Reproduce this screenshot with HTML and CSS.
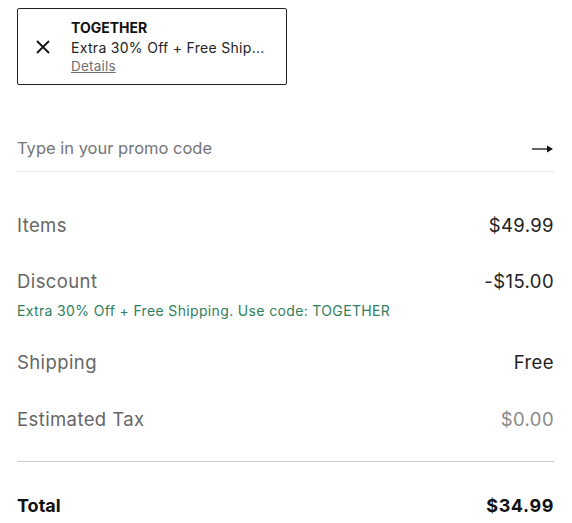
FILE: index.html
```html
<!DOCTYPE html>
<html>
<head>
<meta charset="utf-8">
<link rel="stylesheet" href="styles.css">
</head>
<body>
<div class="page">
  <div class="promo-card">
    <button class="remove" aria-label="Remove">
      <svg width="14" height="14" viewBox="0 0 14 14"><path d="M1 1 L13 13 M13 1 L1 13" stroke="#111" stroke-width="1.8" fill="none"/></svg>
    </button>
    <div class="promo-info">
      <div class="promo-code">TOGETHER</div>
      <div class="promo-desc">Extra 30% Off + Free Ship...</div>
      <a class="promo-link" href="#">Details</a>
    </div>
  </div>

  <div class="promo-input">
    <span class="placeholder">Type in your promo code</span>
    <svg class="arrow" width="21" height="10" viewBox="0 0 21 10"><path d="M0 5 H16" stroke="#111" stroke-width="1.3"/><path d="M15 1.5 L21 5 L15 8.5 Z" fill="#111"/></svg>
  </div>

  <div class="summary">
    <div class="row">
      <span class="label">Items</span>
      <span class="value">$49.99</span>
    </div>
    <div class="row discount">
      <div class="label-group">
        <span class="label">Discount</span>
        <span class="note">Extra 30% Off + Free Shipping. Use code: TOGETHER</span>
      </div>
      <span class="value">-$15.00</span>
    </div>
    <div class="row">
      <span class="label">Shipping</span>
      <span class="value">Free</span>
    </div>
    <div class="row tax">
      <span class="label">Estimated Tax</span>
      <span class="value muted">$0.00</span>
    </div>
  </div>

  <div class="total">
    <span class="label">Total</span>
    <span class="value">$34.99</span>
  </div>
</div>
</body>
</html>
```

FILE: styles.css
```css
* { box-sizing: border-box; }
html, body { margin: 0; padding: 0; background: #fff; }
body {
  font-family: Inter, "Liberation Sans", Arial, sans-serif;
  color: #111;
}
.page {
  width: 572px;
  padding: 8px 18px 0 17px;
}
.promo-card {
  width: 270px;
  height: 77px;
  border: 1px solid #222;
  border-radius: 2px;
  display: flex;
  align-items: center;
}
.remove {
  border: 0;
  background: none;
  padding: 0;
  margin: 0 0 0 18px;
  width: 14px;
  height: 14px;
  display: flex;
}
.promo-info {
  margin-left: 21px;
  display: flex;
  flex-direction: column;
  font-size: 14px;
  line-height: 19px;
}
.promo-code { font-weight: 700; }
.promo-desc {
  color: #222;
  margin-top: 1px;
  letter-spacing: 0.3px;
}
.promo-link {
  color: #707070;
  font-size: 13.5px;
  letter-spacing: 0.2px;
  text-decoration: underline;
}
.promo-input {
  margin-top: 41px;
  height: 46px;
  border-bottom: 1px solid #e6e6e6;
  display: flex;
  align-items: center;
  justify-content: space-between;
}
.placeholder {
  font-size: 16.5px;
  color: #757575;
  margin-top: -1px;
}
.arrow { margin-right: 1px; }
.summary {
  padding-top: 25px;
  padding-bottom: 15px;
  border-bottom: 1px solid #cccccc;
}
.row {
  display: flex;
  justify-content: space-between;
  align-items: flex-start;
  padding: 16px 0;
  font-size: 18.5px;
  line-height: 24px;
  letter-spacing: 0.4px;
}
.row.discount { padding-bottom: 13px; }
.row.tax { padding-top: 17px; padding-bottom: 15px; }
.label-group { display: flex; flex-direction: column; }
.label { color: #666; }
.value { color: #222; }
.value.muted { color: #8a8a8a; }
.note {
  margin-top: 8px;
  font-size: 14px;
  line-height: 20px;
  letter-spacing: 0.35px;
  color: #2f8060;
}
.total {
  display: flex;
  justify-content: space-between;
  padding-top: 32px;
  font-size: 18px;
  line-height: 24px;
  font-weight: 700;
}
.total .value { letter-spacing: 0.6px; }
.total .label, .total .value { color: #111; }
```
